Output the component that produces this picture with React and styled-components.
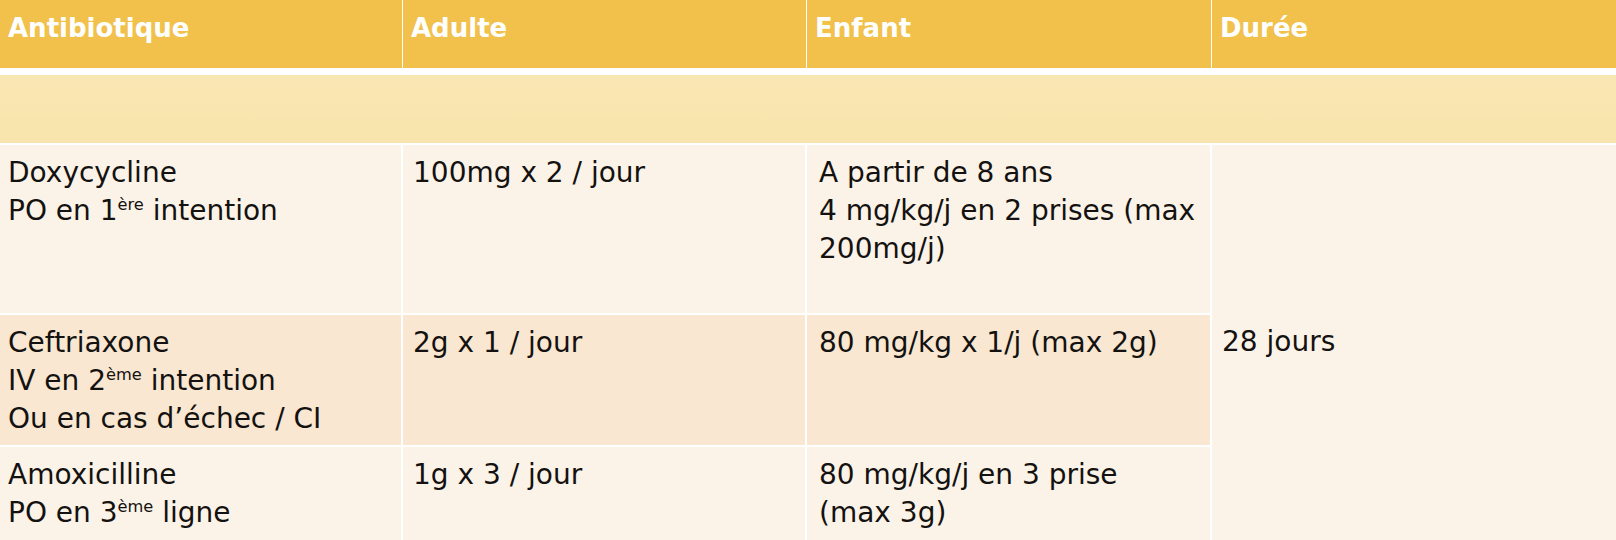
import React from 'react';
import styled, { createGlobalStyle } from 'styled-components';

const GlobalStyle = createGlobalStyle`
    html, body {
        margin: 0;
        padding: 0;
        background: #ffffff;
    }
    body {
        width: 1616px;
        height: 540px;
        overflow: hidden;
        font-family: "DejaVu Sans", "Liberation Sans", sans-serif;
        color: #141210;
    }
`

const rows = [
    {
        name: 'Doxycycline',
        route: ['PO en 1', 'ère', ' intention'],
        extra: null,
        adult: '100mg x 2 / jour',
        child: ['A partir de 8 ans', '4 mg/kg/j en 2 prises (max', '200mg/j)'],
        tone: 'light',
    },
    {
        name: 'Ceftriaxone',
        route: ['IV en 2', 'ème', ' intention'],
        extra: 'Ou en cas d\u2019échec / CI',
        adult: '2g x 1 / jour',
        child: ['80 mg/kg x 1/j (max 2g)'],
        tone: 'warm',
    },
    {
        name: 'Amoxicilline',
        route: ['PO en 3', 'ème', ' ligne'],
        extra: null,
        adult: '1g x 3 / jour',
        child: ['80 mg/kg/j en 3 prise', '(max 3g)'],
        tone: 'light',
    },
];

const headers = ['Antibiotique', 'Adulte', 'Enfant', 'Durée'];

export default function App() {
    return (
        <>
            <GlobalStyle />
            <Table>
                {headers.map((h) => (
                    <HeadCell key={h}>{h}</HeadCell>
                ))}
                <Band />
                {rows.map((r) => (
                    <React.Fragment key={r.name}>
                        <Cell tone={r.tone} col={1}>
                            <Line>{r.name}</Line>
                            <Line>
                                {r.route[0]}
                                <Sup>{r.route[1]}</Sup>
                                {r.route[2]}
                            </Line>
                            {r.extra && <Line>{r.extra}</Line>}
                        </Cell>
                        <Cell tone={r.tone} col={2}>
                            <Line>{r.adult}</Line>
                        </Cell>
                        <Cell tone={r.tone} col={3}>
                            {r.child.map((c) => (
                                <Line key={c}>{c}</Line>
                            ))}
                        </Cell>
                    </React.Fragment>
                ))}
                <DurationCell>28 jours</DurationCell>
            </Table>
        </>
    );
}

const Table = styled.div`
    display: grid;
    grid-template-columns: 401px 402px 403px 1fr;
    grid-template-rows: 68px 73px 168px 130px 110px;
    column-gap: 2px;
    row-gap: 2px;
    width: 1616px;
    background: #ffffff;
`

const HeadCell = styled.div`
    background: #f1c14b;
    color: #ffffff;
    font-weight: 700;
    font-size: 26px;
    line-height: 30px;
    padding: 13px 8px 0;
    margin-right: -1px;
    &:last-of-type {
        margin-right: 0;
    }
`

const Band = styled.div`
    grid-column: 1 / -1;
    margin-top: 5px;
    background: linear-gradient(180deg, #f9e7b3 0%, #f8e4ac 100%);
`

const tones = {
    light: '#fcf3e8',
    warm: '#f9e7d1',
};

const Cell = styled.div`
    grid-column: ${(p) => p.col};
    background: ${(p) => tones[p.tone]};
    padding: 9px 8px 0 ${(p) => (p.col === 1 ? 8 : p.col === 3 ? 12 : 10)}px;
    font-size: 28px;
    line-height: 38px;
`

const Line = styled.div`
    white-space: nowrap;
`

const Sup = styled.span`
    font-size: 0.58em;
    vertical-align: 0.6em;
    line-height: 0;
`

const DurationCell = styled.div`
    grid-column: 4;
    grid-row: 3 / 6;
    background: #fcf3e8;
    padding: 178px 10px 0;
    font-size: 28px;
    line-height: 38px;
`
